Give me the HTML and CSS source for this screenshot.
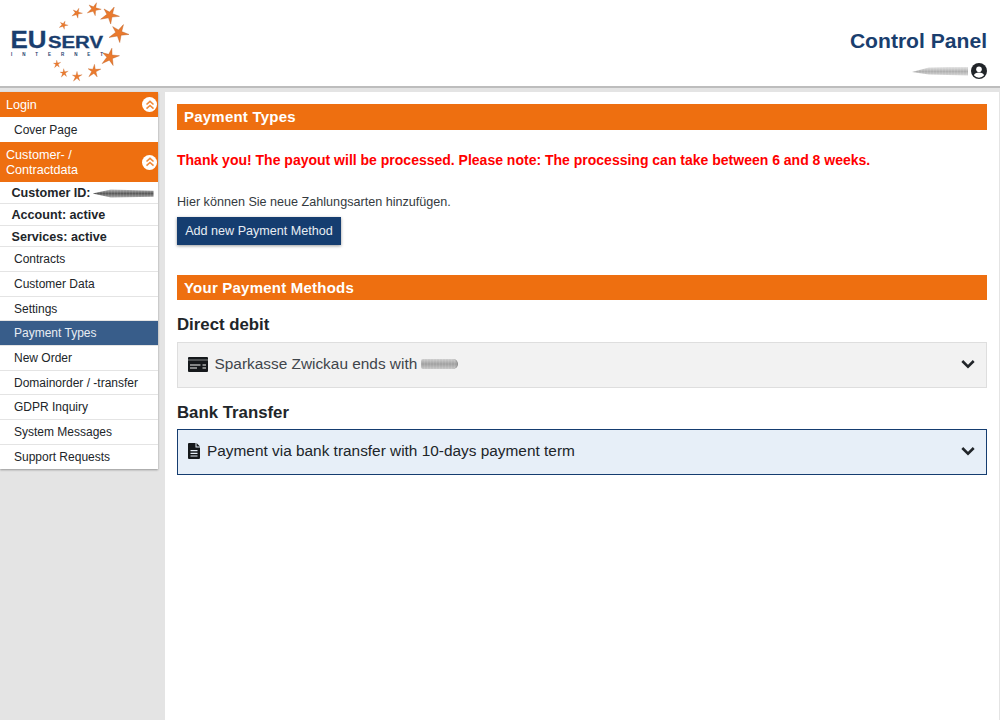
FILE: index.html
```html
<!DOCTYPE html>
<html lang="en">
<head>
    <meta charset="UTF-8">
    <title>Payment Types - Control Panel</title>
    <link rel="stylesheet" href="styles.css">
</head>
<body>
    <header class="top">
        <svg class="logo" width="135" height="85" viewBox="0 0 135 85">
            <defs>
                <polygon id="star" points="0,-10 1.800,-2.600 10,-3.600 3,1 5.400,8.500 0,3.600 -7,9 -3.400,1 -9,-2.800 -2,-2.600"/>
            </defs>
            <g class="stars">
                <use href="#star" transform="translate(110 15) rotate(28) scale(.9)"/>
                <use href="#star" transform="translate(94 9) rotate(22) scale(.68)"/>
                <use href="#star" transform="translate(77 13) rotate(22) scale(.52)"/>
                <use href="#star" transform="translate(63.500 25) rotate(22) scale(.44)"/>
                <use href="#star" transform="translate(119 33) rotate(28) scale(.95)"/>
                <use href="#star" transform="translate(110 57) rotate(12) scale(.9)"/>
                <use href="#star" transform="translate(94 71) rotate(4) scale(.68)"/>
                <use href="#star" transform="translate(77 76.500) rotate(0) scale(.52)"/>
                <use href="#star" transform="translate(64 73) rotate(-4) scale(.44)"/>
                <use href="#star" transform="translate(57 64) rotate(-4) scale(.4)"/>
            </g>
            <text class="logo-eu" x="10.500" y="48" textLength="36" lengthAdjust="spacingAndGlyphs">EU</text>
            <text class="logo-serv" x="48" y="48" textLength="55" lengthAdjust="spacingAndGlyphs">SERV</text>
            <text class="logo-net" x="11" y="55.500" textLength="92">INTERNET</text>
        </svg>
        <div class="top-right">
            <div class="panel-title">Control Panel</div>
            <div class="user-line">
                <span class="smear smear-user"></span>
                <svg class="user-icon" width="16" height="16" viewBox="0 0 16 16">
                    <circle cx="8" cy="8" r="8" fill="#212529"/>
                    <circle cx="8" cy="6.200" r="2.800" fill="#fff"/>
                    <path d="M2.900 12.300c.7-1.900 2.400-2.700 5.100-2.700s4.400.8 5.100 2.700A6.700 6.700 0 0 1 8 14.700a6.700 6.700 0 0 1-5.100-2.400z" fill="#fff"/>
                </svg>
            </div>
        </div>
    </header>

    <div class="page">
        <aside class="sidebar">
            <div class="nav-head nav-head-login">
                <span class="nav-label">Login</span>
                <span class="collapse-btn">
                    <svg width="10" height="10" viewBox="0 0 10 10"><path d="M1.500 4.500 5 1.300l3.500 3.200M1.500 8.700 5 5.500l3.500 3.200"/></svg>
                </span>
            </div>
            <a class="nav-item nav-item-first">Cover Page</a>
            <div class="nav-head nav-head-customer">
                <span class="nav-label">Customer- /<br>Contractdata</span>
                <span class="collapse-btn">
                    <svg width="10" height="10" viewBox="0 0 10 10"><path d="M1.500 4.500 5 1.300l3.500 3.200M1.500 8.700 5 5.500l3.500 3.200"/></svg>
                </span>
            </div>
            <div class="nav-info">Customer ID:<span class="smear smear-id"></span></div>
            <div class="nav-info">Account: active</div>
            <div class="nav-info">Services: active</div>
            <a class="nav-item">Contracts</a>
            <a class="nav-item">Customer Data</a>
            <a class="nav-item">Settings</a>
            <a class="nav-item active">Payment Types</a>
            <a class="nav-item">New Order</a>
            <a class="nav-item">Domainorder / -transfer</a>
            <a class="nav-item">GDPR Inquiry</a>
            <a class="nav-item">System Messages</a>
            <a class="nav-item">Support Requests</a>
        </aside>

        <main class="content">
            <h2 class="bar">Payment Types</h2>
            <p class="notice">Thank you! The payout will be processed. Please note: The processing can take between 6 and 8 weeks.</p>
            <p class="intro">Hier können Sie neue Zahlungsarten hinzufügen.</p>
            <button class="add-btn">Add new Payment Method</button>

            <h2 class="bar bar-methods">Your Payment Methods</h2>

            <h3 class="method-title">Direct debit</h3>
            <div class="method">
                <svg class="method-icon" width="20" height="15" viewBox="0 0 20 15">
                    <path d="M0 1a1 1 0 0 1 1-1h18a1 1 0 0 1 1 1v1.700H0z"/>
                    <path fill-rule="evenodd" d="M0 3.300h20V14a1 1 0 0 1-1 1H1a1 1 0 0 1-1-1zM2 7.500v1h10.500v-1zm12.500 0v1h3.500v-1zM2 10.500v1h7v-1zm12.500 0v1h3.500v-1z"/>
                </svg>
                <span class="method-text method-text-card">Sparkasse Zwickau ends with</span>
                <span class="smear smear-iban"></span>
                <svg class="chevron" width="14" height="14" viewBox="0 0 14 14"><path d="M1.300 4 7 9.700 12.700 4"/></svg>
            </div>

            <h3 class="method-title">Bank Transfer</h3>
            <div class="method method-open">
                <svg class="method-icon" width="12" height="16" viewBox="0 0 12 16">
                    <path fill-rule="evenodd" d="M1 0h6.500v4.500H12V15a1 1 0 0 1-1 1H1a1 1 0 0 1-1-1V1a1 1 0 0 1 1-1zm1.500 7v1.200h7V7zm0 2.700v1.200h7V9.700zm0 2.700v1.200h7v-1.200z"/>
                    <path d="M8.500 0 12 3.500H8.500z"/>
                </svg>
                <span class="method-text">Payment via bank transfer with 10-days payment term</span>
                <svg class="chevron" width="14" height="14" viewBox="0 0 14 14"><path d="M1.300 4 7 9.700 12.700 4"/></svg>
            </div>
        </main>
    </div>
</body>
</html>
```

FILE: styles.css
```css
* {
    margin: 0;
    padding: 0;
    box-sizing: border-box;
}

html, body {
    height: 720px;
    overflow: hidden;
}

body {
    font-family: 'Liberation Sans', Arial, sans-serif;
    background: #e4e4e4;
    color: #212529;
    display: flex;
    flex-direction: column;
}

.top {
    height: 88px;
    flex: none;
    background: #fff;
    border-bottom: 2px solid #bdbdbd;
    display: flex;
    justify-content: space-between;
}

.logo {
    display: block;
}

.stars {
    fill: #ea7a2e;
    stroke: #b85a1e;
    stroke-width: .4;
}

.logo-eu {
    font-size: 23.500px;
    font-weight: 700;
    fill: #1a3e6e;
    stroke: #1a3e6e;
    stroke-width: .3;
}

.logo-serv {
    font-size: 16px;
    font-weight: 700;
    fill: #1a3e6e;
    stroke: #1a3e6e;
    stroke-width: .3;
}

.logo-net {
    font-size: 4.500px;
    font-weight: 700;
    fill: #1a3e6e;
}

.top-right {
    padding: 28px 13px 0 0;
    display: flex;
    flex-direction: column;
    align-items: flex-end;
}

.panel-title {
    font-size: 21.100px;
    line-height: 26px;
    font-weight: 700;
    color: #1a3e6e;
}

.user-line {
    margin-top: 9px;
    display: flex;
    align-items: center;
    gap: 3px;
}

.user-icon {
    display: block;
}

.smear {
    display: inline-block;
    filter: blur(.7px);
    background: repeating-linear-gradient(90deg, rgba(255, 255, 255, .1) 0 1px, transparent 1px 3px), linear-gradient(#e4e4e4, #b0b0b0 50%, #dcdcdc);
}

.smear-user {
    width: 56px;
    height: 9px;
    clip-path: polygon(0 60%, 30% 10%, 100% 0, 100% 100%, 30% 90%);
}

.smear-id {
    width: 61px;
    height: 9px;
    margin-left: 2px;
    background: repeating-linear-gradient(90deg, rgba(255, 255, 255, .1) 0 1px, transparent 1px 3px), linear-gradient(#c4c4c4, #5a5a5a 50%, #b4b4b4);
    clip-path: polygon(0 50%, 30% 5%, 100% 20%, 100% 85%, 30% 95%);
    vertical-align: -1px;
}

.smear-iban {
    width: 37px;
    height: 10px;
    margin-left: 4px;
    border-radius: 2px 5px 5px 2px;
    background: repeating-linear-gradient(90deg, rgba(255, 255, 255, .1) 0 1px, transparent 1px 3px), linear-gradient(#cfcfcf, #a0a0a0 50%, #c8c8c8);
    border-right: 1px solid #8a8a8a;
}

.page {
    flex: 1;
    min-height: 0;
    display: flex;
    align-items: flex-start;
    padding-top: 4px;
}

.sidebar {
    width: 158px;
    flex: none;
    background: #fff;
    box-shadow: 0 1px 2px rgba(0, 0, 0, .35);
    font-size: 12px;
    margin-right: 7px;
}

.nav-head {
    background: #ee6f10;
    color: #fff;
    font-size: 12.600px;
    line-height: 15px;
    padding-left: 6px;
    padding-right: 1px;
    display: flex;
    justify-content: space-between;
    align-items: center;
}

.nav-label {
    padding-top: 2px;
}

.nav-head-login {
    height: 25px;
}

.nav-head-customer {
    height: 40px;
}

.collapse-btn {
    width: 15px;
    height: 15px;
    border-radius: 50%;
    background: #fff;
    display: flex;
    align-items: center;
    justify-content: center;
}

.collapse-btn path {
    fill: none;
    stroke: #ef8a3a;
    stroke-width: 1.600;
}

.nav-item {
    display: block;
    height: 24.700px;
    line-height: 24px;
    padding-left: 14px;
    color: #212529;
    border-bottom: 1px solid #e4e4e4;
}

.nav-item-first {
    height: 25px;
    line-height: 26px;
    border-bottom: 0;
}

.nav-item:last-child {
    height: 24px;
    border-bottom: 0;
}

.nav-item.active {
    background: #385d8a;
    color: #e8edf3;
    border-bottom: 1px solid #e4e4e4;
}

.nav-info {
    height: 21.770px;
    line-height: 23px;
    padding-left: 11.500px;
    font-size: 12.600px;
    font-weight: 700;
    color: #212529;
    border-bottom: 1px solid #e4e4e4;
}

.content {
    flex: 1;
    height: 100%;
    background: #fff;
    margin-right: 1px;
    padding: 12px 12px 0 12px;
}

.bar {
    height: 26px;
    line-height: 26px;
    background: #ee6f10;
    color: #fff;
    font-size: 15px;
    font-weight: 700;
    letter-spacing: .22px;
    padding-left: 7px;
}

.notice {
    margin-top: 22px;
    font-size: 14px;
    line-height: 17px;
    font-weight: 700;
    color: #f00;
}

.intro {
    margin-top: 25px;
    font-size: 12.600px;
    line-height: 16px;
    color: #343a40;
}

.add-btn {
    display: block;
    margin-top: 7px;
    width: 164px;
    height: 28px;
    border: 0;
    background: #153d70;
    color: #e8edf3;
    font-family: inherit;
    font-size: 12.600px;
    box-shadow: 0 1px 3px rgba(0, 0, 0, .4);
}

.bar-methods {
    margin-top: 30px;
    height: 25px;
    line-height: 25px;
}

.method-title {
    margin-top: 15px;
    font-size: 16.800px;
    line-height: 20px;
    font-weight: 700;
    color: #212529;
}

.method {
    margin-top: 7px;
    height: 46px;
    padding: 0 10px 2px;
    display: flex;
    align-items: center;
    background: #f2f2f2;
    border: 1px solid #dedede;
    font-size: 15.400px;
    color: #3f454b;
}

.method-open {
    margin-top: 6px;
    background: #e7eff8;
    border-color: #153d70;
    color: #212529;
}

.method-icon {
    fill: #15181b;
    flex: none;
}

.method-text {
    margin-left: 7px;
}

.method-text-card {
    margin-left: 6.500px;
}

.chevron {
    margin-left: auto;
    margin-right: 1px;
}

.chevron path {
    fill: none;
    stroke: #212529;
    stroke-width: 2.600;
}
```
